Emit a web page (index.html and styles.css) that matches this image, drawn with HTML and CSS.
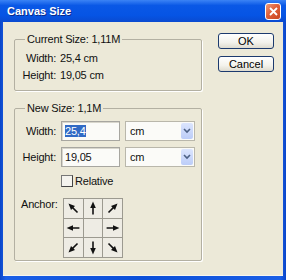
FILE: index.html
```html
<!DOCTYPE html>
<html lang="en">
<head>
    <meta charset="UTF-8">
    <title>Canvas Size</title>
    <link rel="stylesheet" href="styles.css">
</head>
<body>
    <svg width="0" height="0" class="defs">
        <symbol id="arrow" viewBox="0 0 20 20">
            <line x1="10" y1="18" x2="10" y2="8" stroke="#111" stroke-width="2"/>
            <polygon points="10,2 6.5,10 13.5,10" fill="#111"/>
        </symbol>
    </svg>
    <div class="window">
        <div class="titlebar">
            <span class="title">Canvas Size</span>
            <span class="close">
                <svg width="9" height="9" viewBox="0 0 9 9">
                    <path d="M1 1 L8 8 M8 1 L1 8" stroke="#fff" stroke-width="1.8"/>
                </svg>
            </span>
        </div>
        <div class="dialog">
            <div class="groups">
                <fieldset class="group">
                    <legend>Current Size: 1,11M</legend>
                    <div class="info">
                        <span class="lbl">Width:</span><span>25,4 cm</span>
                        <span class="lbl">Height:</span><span>19,05 cm</span>
                    </div>
                </fieldset>
                <fieldset class="group new-size">
                    <legend>New Size: 1,1M</legend>
                    <div class="size-row">
                        <span class="lbl">Width:</span>
                        <span class="field"><span class="selected">25,4</span></span>
                        <span class="select">cm<span class="drop"><svg width="8" height="6" viewBox="0 0 8 6"><path d="M1 1 L4 4 L7 1" fill="none" stroke="#4d6185" stroke-width="1.6"/></svg></span></span>
                    </div>
                    <div class="size-row">
                        <span class="lbl">Height:</span>
                        <span class="field">19,05</span>
                        <span class="select">cm<span class="drop"><svg width="8" height="6" viewBox="0 0 8 6"><path d="M1 1 L4 4 L7 1" fill="none" stroke="#4d6185" stroke-width="1.6"/></svg></span></span>
                    </div>
                    <div class="relative">
                        <span class="checkbox"></span>Relative
                    </div>
                    <div class="anchor-row">
                        <span class="anchor-label">Anchor:</span>
                        <div class="anchor-grid">
                            <span class="cell"><svg width="16" height="16"><use href="#arrow" transform="rotate(-45 8 8)" width="16" height="16"/></svg></span>
                            <span class="cell"><svg width="16" height="16"><use href="#arrow" width="16" height="16"/></svg></span>
                            <span class="cell"><svg width="16" height="16"><use href="#arrow" transform="rotate(45 8 8)" width="16" height="16"/></svg></span>
                            <span class="cell"><svg width="16" height="16"><use href="#arrow" transform="rotate(-90 8 8)" width="16" height="16"/></svg></span>
                            <span class="cell"></span>
                            <span class="cell"><svg width="16" height="16"><use href="#arrow" transform="rotate(90 8 8)" width="16" height="16"/></svg></span>
                            <span class="cell"><svg width="16" height="16"><use href="#arrow" transform="rotate(-135 8 8)" width="16" height="16"/></svg></span>
                            <span class="cell"><svg width="16" height="16"><use href="#arrow" transform="rotate(180 8 8)" width="16" height="16"/></svg></span>
                            <span class="cell"><svg width="16" height="16"><use href="#arrow" transform="rotate(135 8 8)" width="16" height="16"/></svg></span>
                        </div>
                    </div>
                </fieldset>
            </div>
            <div class="buttons">
                <button class="btn">OK</button>
                <button class="btn">Cancel</button>
            </div>
        </div>
    </div>
</body>
</html>
```

FILE: styles.css
```css
/* General */
* {
    margin: 0;
    padding: 0;
    box-sizing: border-box;
}

body {
    margin: 0;
    font-family: 'Liberation Sans', Arial, sans-serif;
    font-size: 11px;
    letter-spacing: -0.2px;
    color: #111;
    background-color: #0b4fd8;
}

.defs {
    position: absolute;
}

/* Window frame */
.window {
    width: 286px;
    height: 280px;
    display: flex;
    flex-direction: column;
    background: linear-gradient(90deg, #0a45c8, #1a5fe6 2%, #0b4fd8 50%, #1a5fe6 98%, #0a45c8);
}

.titlebar {
    height: 22px;
    flex: none;
    display: flex;
    align-items: center;
    justify-content: space-between;
    padding: 0 5px 0 7px;
    background: linear-gradient(#3b83f5, #0a58e6 25%, #0654e4 70%, #0a4ad0);
}

.title {
    color: #fff;
    font-weight: bold;
    font-size: 11px;
    letter-spacing: 0;
    text-shadow: 1px 1px 0 #0a2a8a;
}

.close {
    width: 16px;
    height: 17px;
    margin-top: 1px;
    display: flex;
    align-items: center;
    justify-content: center;
    border: 1px solid #fff;
    border-radius: 3px;
    background: linear-gradient(135deg, #f09a7a, #e0603a 45%, #c8451f);
}

/* Dialog body */
.dialog {
    flex: 1;
    margin: 0 3px 4px;
    padding: 11px 0 0 11px;
    display: flex;
    background-color: #ece9d8;
    border-bottom: 1px solid #f7f6f0;
}

.groups {
    width: 188px;
}

.group {
    margin: 0;
    padding: 0;
    min-width: 0;
    border: 1px solid #b3b0a2;
    border-radius: 2px;
    box-shadow: 1px 1px 0 #fff;
}

.group legend {
    margin-left: 10px;
    padding: 0 2px;
    line-height: 13px;
}

.info {
    display: grid;
    grid-template-columns: 41px auto;
    column-gap: 4px;
    line-height: 17px;
    padding: 4px 0 6px;
}

.lbl {
    text-align: right;
}

.new-size {
    margin-top: 11px;
    padding: 6px 0 2px;
}

/* Width / Height rows */
.size-row {
    display: flex;
    align-items: center;
    height: 20px;
}

.size-row + .size-row {
    margin-top: 6px;
}

.size-row .lbl {
    width: 41px;
    margin-right: 5px;
}

.field {
    width: 59px;
    height: 20px;
    margin-right: 5px;
    padding: 3px 0 0 3px;
    background-color: #fbfbf8;
    border: 1px solid #a7a6a0;
    box-shadow: inset 1px 1px 0 #d8d6cc;
    line-height: 13px;
}

.selected {
    background-color: #316ac5;
    color: #fff;
}

.select {
    width: 70px;
    height: 20px;
    display: flex;
    align-items: center;
    justify-content: space-between;
    padding: 0 1px 0 4px;
    background-color: #fbfbf8;
    border: 1px solid #b9b7ab;
}

.drop {
    width: 12px;
    height: 16px;
    display: flex;
    align-items: center;
    justify-content: center;
    background: linear-gradient(#dbe5fd, #bccdf8);
    border-radius: 2px;
}

/* Relative checkbox */
.relative {
    display: flex;
    align-items: center;
    height: 12px;
    margin: 8px 0 0 46px;
}

.checkbox {
    width: 12px;
    height: 12px;
    margin-right: 2px;
    border: 1px solid #444;
    border-top-color: #777;
    border-left-color: #777;
    background-color: #f4f3ee;
}

/* Anchor */
.anchor-row {
    display: flex;
    margin-top: 11px;
    padding-left: 6px;
}

.anchor-label {
    width: 42px;
    line-height: 13px;
}

.anchor-grid {
    width: 60px;
    height: 60px;
    display: grid;
    grid-template-columns: repeat(3, 1fr);
    grid-template-rows: repeat(3, 1fr);
    border: 1px solid #9c9a90;
    background-color: #9c9a90;
    gap: 1px;
}

.cell {
    display: flex;
    align-items: center;
    justify-content: center;
    background-color: #eeece4;
}

/* Buttons */
.buttons {
    margin-left: 16px;
    display: flex;
    flex-direction: column;
    gap: 7px;
}

.btn {
    width: 56px;
    height: 16px;
    font-family: 'Liberation Sans', Arial, sans-serif;
    font-size: 11px;
    color: #000;
    border: 1px solid #1c3a6e;
    border-radius: 3px;
    background: linear-gradient(#ffffff, #f3f2ec 60%, #dedbcf);
}
```
